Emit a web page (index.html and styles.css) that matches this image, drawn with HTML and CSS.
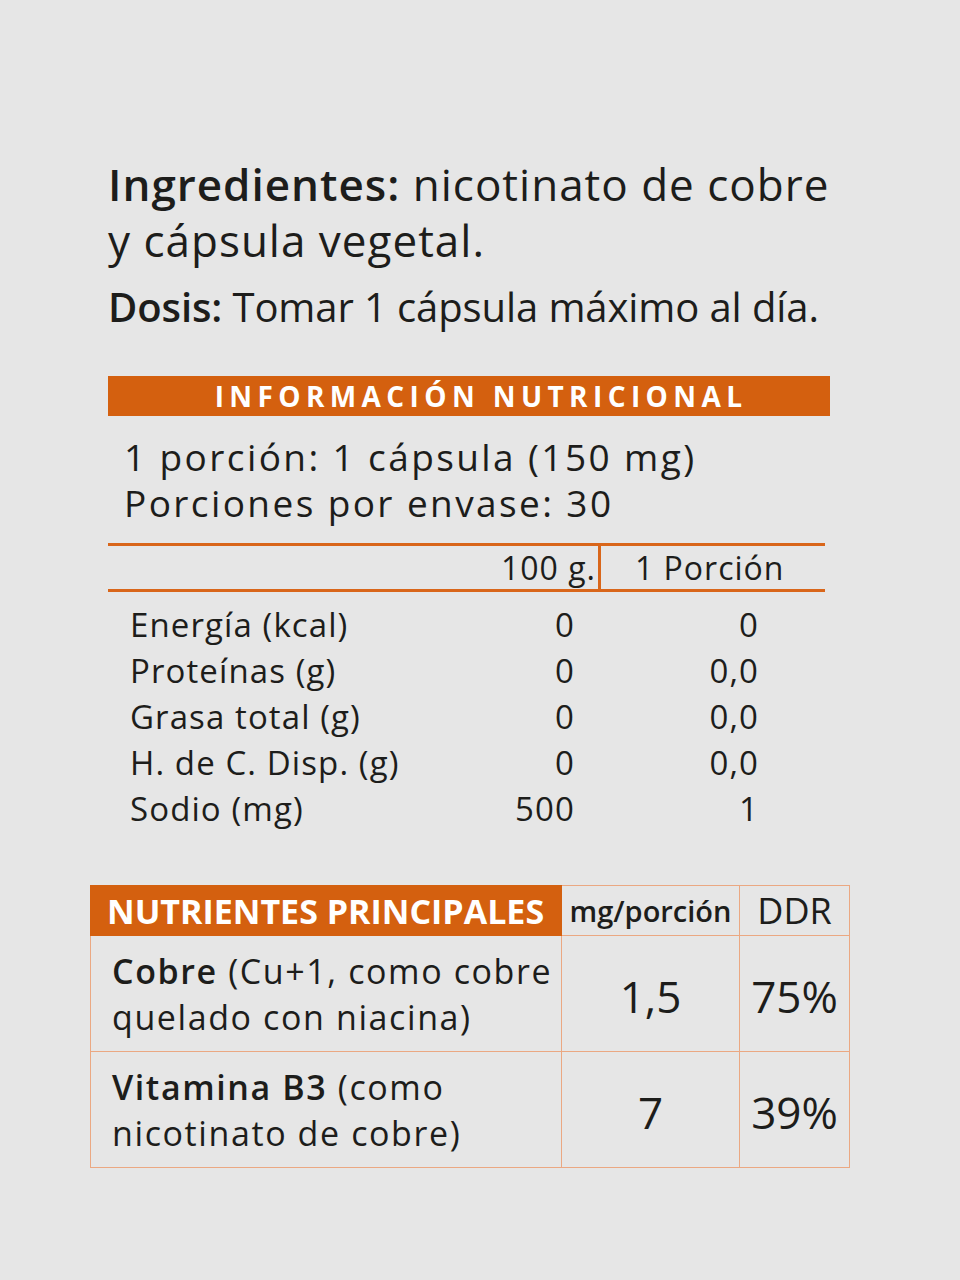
FILE: index.html
```html
<!DOCTYPE html>
<html lang="es">
<head>
<meta charset="utf-8">
<link rel="stylesheet" href="styles.css">
<title>Información nutricional</title>
</head>
<body>
<main class="sheet">
  <section class="intro">
    <p class="ingredients"><b>Ingredientes:</b> nicotinato de cobre<br>y cápsula vegetal.</p>
    <p class="dose"><b>Dosis:</b> Tomar 1 cápsula máximo al día.</p>
  </section>

  <section class="nutrition">
    <h2 class="bar">INFORMACIÓN NUTRICIONAL</h2>
    <div class="serving">
      <p>1 porción: 1 cápsula (150 mg)</p>
      <p>Porciones por envase: 30</p>
    </div>
    <div class="head-row">
      <span class="h100">100 g.</span>
      <span class="hpor">1 Porción</span>
    </div>
    <div class="rows">
      <span>Energía (kcal)</span><span class="v">0</span><span class="v">0</span>
      <span>Proteínas (g)</span><span class="v">0</span><span class="v">0,0</span>
      <span>Grasa total (g)</span><span class="v">0</span><span class="v">0,0</span>
      <span>H. de C. Disp. (g)</span><span class="v">0</span><span class="v">0,0</span>
      <span>Sodio (mg)</span><span class="v">500</span><span class="v">1</span>
    </div>
  </section>

  <table class="main">
    <tr class="thead">
      <th class="title">NUTRIENTES PRINCIPALES</th>
      <th class="mg">mg/porción</th>
      <th class="ddr">DDR</th>
    </tr>
    <tr>
      <td class="name"><b>Cobre</b> (Cu+1, como cobre<br>quelado con niacina)</td>
      <td class="num">1,5</td>
      <td class="num">75%</td>
    </tr>
    <tr>
      <td class="name"><b>Vitamina B3</b> (como<br>nicotinato de cobre)</td>
      <td class="num">7</td>
      <td class="num">39%</td>
    </tr>
  </table>
</main>
</body>
</html>
```

FILE: styles.css
```css
html, body {
  margin: 0;
  padding: 0;
  background: #e6e6e6;
}
body {
  font-family: "Open Sans", Lato, sans-serif;
  color: #1d1d1b;
  font-variant-ligatures: none;
}
.sheet {
  width: 960px;
  height: 1280px;
  box-sizing: border-box;
  padding-top: 156px;
}
.intro {
  margin-left: 108px;
  width: 760px;
}
.intro p {
  margin: 0;
}
.intro .ingredients {
  font-size: 44px;
  line-height: 56px;
  letter-spacing: 1px;
}
.intro b { font-weight: 600; }
.intro .dose {
  margin-top: 11px;
  font-size: 40px;
  line-height: 56px;
  letter-spacing: -0.1px;
}
.nutrition {
  margin: 41px 0 0 108px;
  width: 722px;
}
.bar {
  margin: 0;
  height: 40px;
  background: #d4600f;
  color: #fff;
  font-size: 28px;
  font-weight: 700;
  letter-spacing: 5.4px;
  line-height: 40px;
  text-align: center;
  padding-left: 24px;
}
.serving {
  margin: 18px 0 0 16px;
  font-size: 37px;
  letter-spacing: 2.4px;
}
.serving p {
  margin: 0;
  height: 46px;
  line-height: 46px;
}
.head-row {
  margin-top: 17px;
  width: 717px;
  height: 43px;
  border-top: 3px solid #d9661a;
  border-bottom: 3px solid #d9661a;
  display: grid;
  grid-template-columns: 490px 1fr;
  font-size: 32px;
  line-height: 43px;
  letter-spacing: 1px;
}
.h100 {
  text-align: right;
  padding-right: 2px;
}
.hpor {
  border-left: 3px solid #d9661a;
  padding-left: 34px;
}
.rows {
  margin-top: 10px;
  padding-left: 22px;
  display: grid;
  grid-template-columns: 340px 105px 184px;
  font-size: 33px;
  line-height: 46px;
  letter-spacing: 1.1px;
}
.rows .v { text-align: right; }

table.main {
  margin: 53px 0 0 90px;
  border-collapse: collapse;
  width: 760px;
  table-layout: fixed;
}
table.main td,
table.main th {
  border: 1.5px solid #eba882;
  padding: 0;
}
table.main .thead th {
  height: 48px;
  font-weight: 400;
}
table.main th.title {
  width: 471px;
  background: #d4600f;
  border-color: #d4600f;
  color: #fff;
  font-size: 34px;
  font-weight: 700;
  letter-spacing: 0;
  text-align: left;
  padding-left: 16px;
  box-sizing: border-box;
}
table.main th.mg {
  width: 177px;
  font-size: 29px;
  font-weight: 600;
  letter-spacing: 0;
}
table.main th.ddr {
  font-size: 36px;
  font-weight: 400;
}
table.main td.name {
  height: 116px;
  font-size: 34px;
  line-height: 46px;
  letter-spacing: 1.6px;
  padding: 0 0 0 21px;
  box-sizing: border-box;
}
table.main td.name b { font-weight: 600; }
table.main td.num {
  text-align: center;
  font-size: 44px;
  padding-top: 4px;
}
```
